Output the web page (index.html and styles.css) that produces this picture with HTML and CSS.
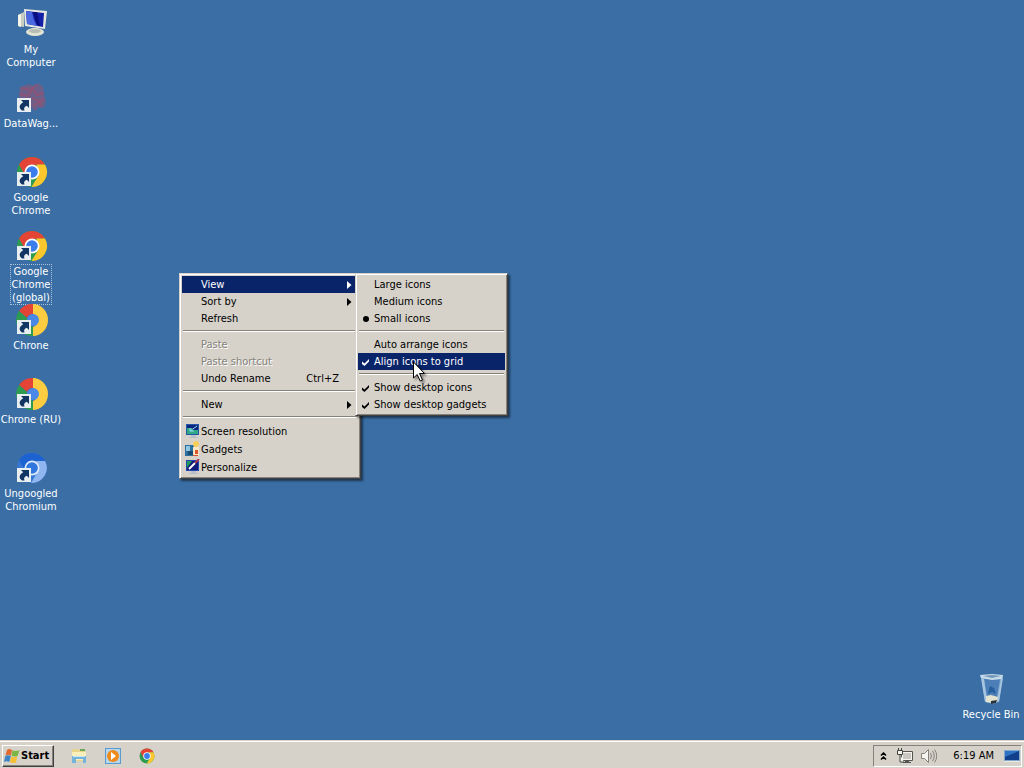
FILE: index.html
```
<!DOCTYPE html>
<html lang="en">

<head>
    <meta charset="UTF-8">
    <meta name="viewport" content="width=device-width, initial-scale=1.0">
    <title>Desktop</title>
    <link rel="stylesheet" href="styles.css">
</head>

<body>
    <!-- shared symbols -->
    <svg class="defs" aria-hidden="true">
        <symbol id="shortcut" viewBox="0 0 14 14">
            <path fill="#e9eef0" d="M0 0h14v14H0z" />
            <path fill="#123663" d="M4 2h8v8L9.800 7.800C7.500 8.500 6.500 10 7.500 12.500H5C1.500 10 2 6.500 6.200 4.200z" />
        </symbol>
        <symbol id="chrome" viewBox="0 0 32 32">
            <circle cx="16" cy="16" r="15" fill="#2d9b50" />
            <path fill="#e34436" d="M3 8.500A15 15 0 0 1 29 8.500L16 9l-6.500 11z" />
            <path fill="#fbc72c" d="M29 8.500A15 15 0 0 1 15.500 31L22.500 19.500 20.500 8.500z" />
            <circle cx="16" cy="16" r="7.500" fill="#fff" />
            <circle cx="16" cy="16" r="5.800" fill="#3b7ded" />
        </symbol>
        <symbol id="chrone" viewBox="0 0 32 32">
            <path fill="#e34436" d="M17 0v10a6 6 0 0 0-6 4L3 7A16 16 0 0 1 17 0z" />
            <path fill="#2d9b50" d="M3 7l8 7v6l6 3v9A16 16 0 0 1 3 7z" />
            <path fill="#fdcc40" d="M17 0a15 16 0 0 1 0 32V23a7 7 0 0 0 0-13z" />
            <circle cx="17" cy="16" r="6" fill="#4a88e8" />
        </symbol>
        <symbol id="check" viewBox="0 0 9 9">
            <path fill="currentColor" d="M1 3.500l2.500 2L8 1v2.500L3.500 8 1 6z" />
        </symbol>
        <symbol id="arrow" viewBox="0 0 5 8">
            <path fill="currentColor" d="M0 0l4.500 4L0 8z" />
        </symbol>
    </svg>

    <main class="desktop">
        <!-- desktop icons -->
        <div class="icons">
            <a class="icon" href="#">
                <svg class="pic" viewBox="0 0 32 32">
                    <path fill="#c9ccc0" d="M3 7l6-3v15l-6-1z" />
                    <path fill="#f4f4e8" d="M3 7l3-1v13l-3-1z" />
                    <path fill="#e6e8e0" d="M9 1l23 2-2 18-20-3z" />
                    <path fill="#1420a8" d="M11 3l18 2-1 14-16-3z" />
                    <path fill="#4a68e0" d="M11 3l6 1 2 8 3 6-10-2z" />
                    <path fill="#0a0f80" d="M18 4l4 0 3 14-3-1z" />
                    <path fill="#9fb0b8" d="M17 20l7 1v5h-7z" />
                    <ellipse cx="20" cy="24" rx="9" ry="4" fill="#e4e4d4" />
                    <ellipse cx="20" cy="23" rx="6" ry="2" fill="#b8bdb4" />
                </svg>
                <span class="label">My Computer</span>
            </a>
            <a class="icon" href="#">
                <svg class="pic" viewBox="0 0 32 32">
                    <path fill="#6d5f88" d="M5 5l9-3 4 2 5-3 5 4 1 8 2 6-2 7-5-1-4 4-5-5-9-2-2-9z" />
                    <path fill="none" stroke="#8a5579" stroke-width="2" d="M6 6l9 2 6-5M5 12l8 2 5-7 4 6 7-2M17 16l7 3 5-2M18 23l8-3-1 5" />
                    <use href="#shortcut" x="2" y="16" width="14" height="14" />
                </svg>
                <span class="label">DataWag...</span>
            </a>
            <a class="icon" href="#">
                <svg class="pic" viewBox="0 0 32 32">
                    <use href="#chrome" x="1" width="32" height="32" />
                    <use href="#shortcut" x="2" y="16" width="14" height="14" />
                </svg>
                <span class="label">Google Chrome</span>
            </a>
            <a class="icon" href="#">
                <svg class="pic" viewBox="0 0 32 32">
                    <use href="#chrome" x="1" width="32" height="32" />
                    <use href="#shortcut" x="2" y="16" width="14" height="14" />
                </svg>
                <span class="label focused">Google Chrome (global)</span>
            </a>
            <a class="icon" href="#">
                <svg class="pic" viewBox="0 0 32 32">
                    <use href="#chrone" x="1" width="32" height="32" />
                    <use href="#shortcut" x="2" y="16" width="14" height="14" />
                </svg>
                <span class="label">Chrone</span>
            </a>
            <a class="icon" href="#">
                <svg class="pic" viewBox="0 0 32 32">
                    <use href="#chrone" x="1" width="32" height="32" />
                    <use href="#shortcut" x="2" y="16" width="14" height="14" />
                </svg>
                <span class="label">Chrone (RU)</span>
            </a>
            <a class="icon" href="#">
                <svg class="pic" viewBox="0 0 32 32">
                    <circle cx="17" cy="16" r="15" fill="#3777d4" />
                    <path fill="#1c62d1" d="M4 8A15 15 0 0 1 30 9L17 9 10 18z" />
                    <path fill="#8fb6ef" d="M30 9A15 15 0 0 1 16 31L23 19 21 9z" />
                    <circle cx="17" cy="16" r="7.500" fill="#dfeafc" />
                    <circle cx="17" cy="16" r="5.800" fill="#2f77dc" />
                    <use href="#shortcut" x="2" y="16" width="14" height="14" />
                </svg>
                <span class="label">Ungoogled Chromium</span>
            </a>
        </div>

        <a class="icon recycle" href="#">
            <svg class="pic" viewBox="0 0 32 32">
                <path fill="#7fa5cc" d="M6 3l22-1-4 27-6 2-8-2z" />
                <path fill="#4c7fb8" d="M9 6h16l-3 18H12z" />
                <path fill="#c6dbea" d="M5 2l12-1 11 1-1 4-10 1-11-2z" />
                <path fill="#7296b7" d="M8 3l9-1 9 1-9 2z" />
                <path fill="#a7c5e0" d="M6 5l3 1 3 22-2 1zM26 6l2-1-4 24-2-1z" />
                <path fill="#265e9e" d="M15 13l4 2 2 6-4-2-4 2z" />
                <path fill="#e4e3d0" d="M11 23l5-1 7 2-1 5-4 1-7-1z" />
                <path fill="#28333c" d="M16 28l6-1-1 3-5 1z" />
            </svg>
            <span class="label">Recycle Bin</span>
        </a>

        <!-- context menu -->
        <div class="menu context" role="menu">
            <div class="group">
                <button class="item active" role="menuitem">View<svg class="arrow"><use href="#arrow" /></svg></button>
                <button class="item" role="menuitem">Sort by<svg class="arrow"><use href="#arrow" /></svg></button>
                <button class="item" role="menuitem">Refresh</button>
            </div>
            <div class="group">
                <button class="item" role="menuitem" disabled>Paste</button>
                <button class="item" role="menuitem" disabled>Paste shortcut</button>
                <button class="item" role="menuitem">Undo Rename<span class="key">Ctrl+Z</span></button>
            </div>
            <div class="group">
                <button class="item" role="menuitem">New<svg class="arrow"><use href="#arrow" /></svg></button>
            </div>
            <div class="group">
                <button class="item tall" role="menuitem">
                    <svg class="mark" viewBox="0 0 16 16">
                        <path fill="#b9bfc6" d="M6 12h5v2h2v1H4v-1h2z" />
                        <path fill="#2456a8" d="M1 1h13v11H1z" />
                        <path fill="#0b2580" d="M2 2h11v9H2z" />
                        <path fill="#2fa886" d="M2 5h5v2h6v4H2z" />
                        <path fill="none" stroke="#8fe0f0" d="M12 3L5 8M5 5v3h4" />
                    </svg>Screen resolution
                </button>
                <button class="item tall" role="menuitem">
                    <svg class="mark" viewBox="0 0 16 16">
                        <path fill="#2a6f9f" d="M0 4h9v11H0z" />
                        <path fill="#8fc8e0" d="M1 5h4v5H1z" />
                        <path fill="#164a70" d="M3 10h6v4H3z" />
                        <circle cx="11" cy="3" r="3" fill="#f6cf5a" />
                        <path fill="#f7e6c4" d="M8 6h6v9H8z" />
                        <path fill="#d9542b" d="M10 9h3v4h-3zM8 14h5v1H8z" />
                    </svg>Gadgets
                </button>
                <button class="item tall" role="menuitem">
                    <svg class="mark" viewBox="0 0 16 16">
                        <path fill="#b9bfc6" d="M6 12h5v2h2v1H4v-1h2z" />
                        <path fill="#2346b4" d="M1 1h13v11H1z" />
                        <path fill="#101c78" d="M2 2h11v9H2z" />
                        <path fill="#1f9c58" d="M2 2h5L2 9z" />
                        <path fill="none" stroke="#fff" stroke-width="2" d="M4 10l6-6" />
                        <path fill="none" stroke="#b03a58" stroke-width="2" d="M10 4l4-4" />
                    </svg>Personalize
                </button>
            </div>
        </div>

        <!-- View submenu -->
        <div class="menu submenu" role="menu">
            <div class="group">
                <button class="item" role="menuitemradio">Large icons</button>
                <button class="item" role="menuitemradio">Medium icons</button>
                <button class="item" role="menuitemradio" aria-checked="true"><i class="dot"></i>Small icons</button>
            </div>
            <div class="group">
                <button class="item" role="menuitemcheckbox">Auto arrange icons</button>
                <button class="item active" role="menuitemcheckbox" aria-checked="true"><svg class="check"><use href="#check" /></svg>Align icons to grid</button>
            </div>
            <div class="group">
                <button class="item" role="menuitemcheckbox" aria-checked="true"><svg class="check"><use href="#check" /></svg>Show desktop icons</button>
                <button class="item" role="menuitemcheckbox" aria-checked="true"><svg class="check"><use href="#check" /></svg>Show desktop gadgets</button>
            </div>
        </div>

        <!-- mouse pointer -->
        <svg class="pointer" viewBox="0 0 12 21">
            <path fill="#fff" stroke="#000" d="M.5 1v16l3.700-3.500 3 6.500 2.300-1-3-6.500h5z" />
        </svg>
    </main>

    <footer class="taskbar">
        <button class="start">
            <svg class="flag" viewBox="0 0 16 16">
                <path fill="#e3682f" d="M3 2c2-1.500 3-1 5 0L7 7.500C5 6.500 4 6.500 1.500 7.500z" />
                <path fill="#7cb544" d="M8.500 2.200c2 1 4 1 7 0L13.500 8c-2 1-4 .5-6-.300z" />
                <path fill="#3b84c6" d="M1.300 8c2-1 3.500-1 5.600 0L5.300 14C3.500 13 2 13 0 14z" />
                <path fill="#f4bf35" d="M7.300 8.400c2 1 3.900 1 6 0L12 14.500c-2 1-4 .5-6.200-.200z" />
            </svg>Start
        </button>
        <nav class="quick">
            <button class="launch" aria-label="Explorer">
                <svg viewBox="0 0 16 16">
                    <path fill="#e9d58a" d="M1 1h6l1 1h6v11H1z" />
                    <path fill="#f8efbb" d="M1 4h14v8H1z" />
                    <path fill="#6da958" d="M9 1h5v2H9z" />
                    <path fill="#74b4dc" d="M1 8h14v7h-3v-4H5v4H1z" />
                    <path fill="#c8e6f4" d="M2 8h12v1H2z" />
                </svg>
            </button>
            <button class="launch" aria-label="Media Player">
                <svg viewBox="0 0 16 16">
                    <path fill="#5c9bd0" d="M0 0h16v16H0z" />
                    <path fill="#b6d6ee" d="M1 1h14v14H1z" />
                    <circle cx="8" cy="8" r="6" fill="#ee8b1c" />
                    <path fill="#fff" d="M6 4l5 4-5 4z" />
                </svg>
            </button>
            <button class="launch" aria-label="Google Chrome">
                <svg viewBox="0 0 32 32"><use href="#chrome" width="32" height="32" /></svg>
            </button>
        </nav>
        <div class="tray">
            <button class="launch more" aria-label="Show hidden icons">
                <svg viewBox="0 0 7 8"><path fill="none" stroke="#000" stroke-width="1.500" d="M1 3.500L3.500 1 6 3.500M1 7.500L3.500 5 6 7.500" /></svg>
            </button>
            <svg class="status" viewBox="0 0 16 16">
                <path fill="#f4f4f0" stroke="#55554f" d="M4.500 3.500h11v9h-11z" />
                <path fill="#c9c7c0" d="M6 5h8v6H6z" />
                <path fill="#55554f" d="M8 13h4v1h2v1H6v-1h2z" />
                <path fill="#f4f4f0" stroke="#44443f" d="M.5 2.500h5v4h-5zM3 6.500V14h4M1.500 0v2M4.500 0v2" />
            </svg>
            <svg class="status" viewBox="0 0 16 16">
                <path fill="#f5f4f0" stroke="#84827b" d="M.5 5.500h3l4-4v13l-4-4h-3z" />
                <path fill="none" stroke="#84827b" d="M9.500 5q2 3 0 6M11.500 3q3.500 5 0 10M13.500 1.500q4.500 6.500 0 13" />
            </svg>
            <time class="clock">6:19 AM</time>
            <button class="launch" aria-label="Show desktop">
                <svg viewBox="0 0 16 16">
                    <path fill="#84a8cc" d="M0 2h16v11H0z" />
                    <path fill="#123f8c" d="M1 3h14v9H1z" />
                    <path fill="#2e72c4" d="M1 3h14L1 9z" />
                    <path fill="#e9e8e2" d="M0 13h16v1H0z" />
                </svg>
            </button>
        </div>
    </footer>
</body>

</html>
```

FILE: styles.css
```
:root {
    --face: #d6d2ca;
    --light: #ffffff;
    --shadow: #85827b;
    --dark: #404040;
    --select: #0a246a;
    --desktop: #3a6ea5;
}

* {
    box-sizing: border-box;
    margin: 0;
    padding: 0;
}

body {
    display: flex;
    flex-direction: column;
    height: 100vh;
    overflow: hidden;
    background: var(--desktop);
    font: 11px/13px "DejaVu Sans Condensed", "Noto Sans", sans-serif;
}

button {
    border: 0;
    background: none;
    color: #000;
    font: inherit;
}

.defs {
    position: absolute;
    width: 0;
    height: 0;
}

.desktop {
    position: relative;
    flex: 1;
}

/* desktop icons */
.icons {
    display: grid;
    grid-auto-rows: 74px;
    width: 62px;
    padding-top: 8px;
}

.icon {
    display: flex;
    flex-direction: column;
    align-items: center;
    gap: 3px;
    color: #fff;
    text-align: center;
    text-decoration: none;
}

.pic {
    flex: none;
    width: 32px;
    height: 32px;
    overflow: visible;
}

.label {
    max-width: 62px;
}

.focused {
    width: 40px;
    outline: 1px dotted #a9c3dd;
}

.recycle {
    position: absolute;
    right: 2px;
    bottom: 19px;
    width: 62px;
}

/* menus */
.menu {
    position: absolute;
    padding: 2px;
    border: 1px solid;
    border-color: var(--face) var(--dark) var(--dark) var(--face);
    background: var(--face);
    box-shadow: inset 1px 1px var(--light), inset -1px -1px var(--shadow), 2px 2px 2px rgba(0, 0, 0, 0.5);
}

.context {
    left: 179px;
    top: 273px;
    width: 182px;
}

.submenu {
    left: 355px;
    top: 273px;
    width: 153px;
}

/* etched line between groups */
.group + .group::before {
    content: "";
    display: block;
    margin: 3px 1px 4px;
    border-top: 1px solid var(--shadow);
    border-bottom: 1px solid var(--light);
}

.item {
    position: relative;
    display: flex;
    align-items: center;
    width: 100%;
    height: 17px;
    padding: 0 19px;
    text-align: left;
    white-space: nowrap;
}

.submenu .item {
    padding: 0 16px;
}

.item.tall {
    height: 18px;
}

.item.active {
    background: var(--select);
    color: #fff;
}

.item:disabled {
    color: var(--shadow);
    text-shadow: 1px 1px #fff;
}

.key {
    margin-left: auto;
}

.mark,
.check,
.dot,
.arrow {
    position: absolute;
}

.mark {
    left: 3px;
    width: 16px;
    height: 16px;
}

.check {
    left: 3px;
    top: 5px;
    width: 9px;
    height: 9px;
}

.dot {
    left: 5px;
    width: 6px;
    height: 6px;
    border-radius: 50%;
    background: #000;
}

.arrow {
    right: 6px;
    width: 5px;
    height: 8px;
}

.pointer {
    position: absolute;
    left: 413px;
    top: 361px;
    width: 12px;
    height: 21px;
    filter: drop-shadow(2px 2px 1px rgba(0, 0, 0, 0.4));
}

/* taskbar */
.taskbar {
    display: flex;
    align-items: center;
    height: 28px;
    padding: 2px 2px 0;
    border-top: 1px solid var(--face);
    background: var(--face);
    box-shadow: inset 0 1px var(--light);
}

.start {
    display: flex;
    align-items: center;
    gap: 1px;
    width: 52px;
    height: 22px;
    padding-left: 1px;
    border: 1px solid;
    border-color: var(--light) var(--dark) var(--dark) var(--light);
    box-shadow: inset -1px -1px var(--shadow);
    font-weight: bold;
}

.flag {
    flex: none;
    width: 16px;
    height: 16px;
}

.quick {
    display: flex;
    gap: 18px;
    margin-left: 17px;
}

.launch,
.launch svg,
.status {
    display: block;
    width: 16px;
    height: 16px;
}

.tray {
    display: flex;
    align-items: center;
    gap: 8px;
    height: 22px;
    margin-left: auto;
    padding: 0 1px 0 6px;
    border: 1px solid;
    border-color: var(--shadow) var(--light) var(--light) var(--shadow);
}

.more,
.more svg {
    width: 7px;
    height: 8px;
}

.more {
    margin-right: 2px;
}

.clock {
    margin: 0 2px 0 8px;
}
```
